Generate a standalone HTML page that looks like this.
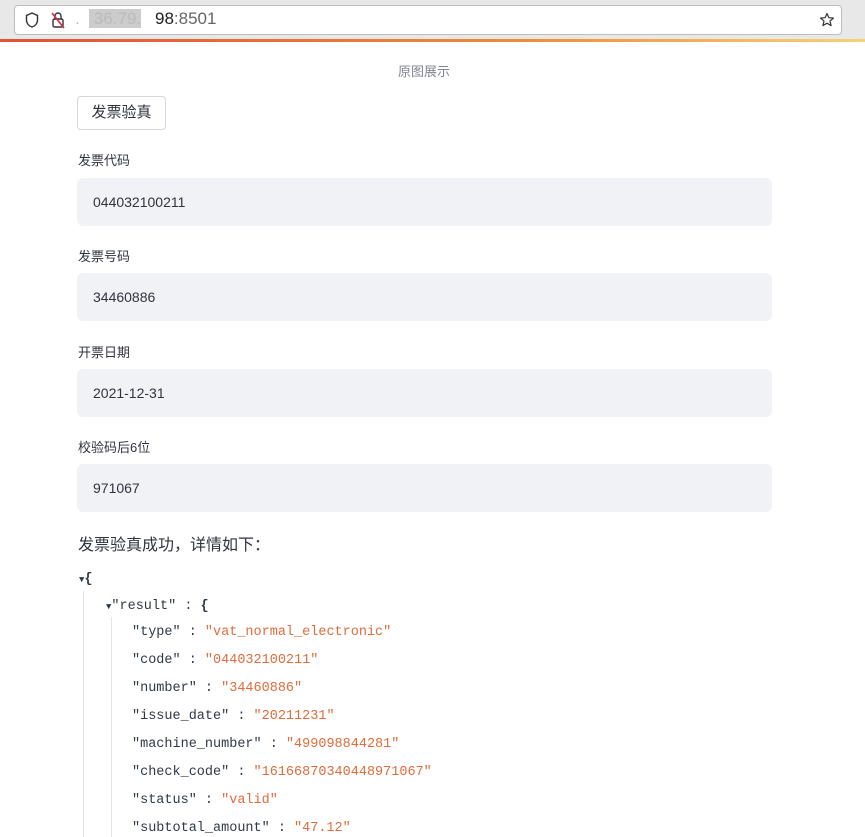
<!DOCTYPE html>
<html><head><meta charset="utf-8"><style>
body{margin:0;width:865px;height:837px;overflow:hidden;background:#fff;font-family:"Liberation Sans","Noto Sans CJK SC",sans-serif;color:#31333f;position:relative}
.bar{position:absolute;left:0;top:0;width:865px;height:40px;background:#e8e8e8}
.url{position:absolute;left:14px;top:5px;width:826px;height:28px;background:#fff;border:1px solid #bdbdbd;border-radius:4px;font-size:17px;color:#222}
.line{position:absolute;left:0;top:39px;width:865px;height:3px;background:linear-gradient(90deg,#e0523a,#f08a3a 60%,#f5d27a)}
.a{position:absolute}
.lbl{position:absolute;left:78px;font-size:13px}
.inp{position:absolute;left:77px;width:695px;height:48px;background:#f0f2f6;border-radius:6px;font-size:14px;line-height:48px;text-indent:16px}
.j{position:absolute;font-family:"Liberation Mono",monospace;font-size:13.5px;color:#2f3a45;white-space:pre}
.s{color:#e06c3c}
</style></head><body>
<div class="bar"></div>
<div class="url">
<svg class="a" style="left:10px;top:6px" width="14" height="16"><path d="M7 1L1.5 3.5V8c0 3.5 2.5 6 5.5 7 3-1 5.5-3.5 5.5-7V3.5Z" fill="none" stroke="#333" stroke-width="1.4"/></svg>
<svg class="a" style="left:36px;top:5px" width="14" height="18"><rect x="2" y="8" width="10" height="8" rx="1.5" fill="none" stroke="#333" stroke-width="1.4"/><path d="M4 8V5a3 3 0 0 1 6 0v3" fill="none" stroke="#333" stroke-width="1.4"/><path d="M1 2L13 17" stroke="#e0223a" stroke-width="1.5"/></svg>
<span class="a" style="left:60px;top:3px;color:#bbb">.&nbsp;&nbsp;<span style="background:#ccc;color:#bbb">&nbsp;36.79.</span></span>
<span class="a" style="left:140px;top:3px">98<span style="color:#666">:8501</span></span>
<svg class="a" style="right:6px;top:6px" width="16" height="16"><path d="M8 1.5l1.9 4.2 4.6.4-3.5 3 1.1 4.5L8 11.2 3.9 13.6 5 9.1 1.5 6.1l4.6-.4Z" fill="none" stroke="#333" stroke-width="1.2" stroke-linejoin="round"/></svg>
</div>
<div class="line"></div>
<div class="a" style="left:398px;top:61px;font-size:13px;color:#808495">原图展示</div>
<div class="a" style="left:77px;top:96px;width:87px;height:32px;border:1px solid #d6d6d9;border-radius:4px;font-size:15px;line-height:32px;text-align:center">发票验真</div>
<div class="lbl" style="top:150px">发票代码</div>
<div class="inp" style="top:178px">044032100211</div>
<div class="lbl" style="top:246px">发票号码</div>
<div class="inp" style="top:273px">34460886</div>
<div class="lbl" style="top:342px">开票日期</div>
<div class="inp" style="top:369px">2021-12-31</div>
<div class="lbl" style="top:437px">校验码后6位</div>
<div class="inp" style="top:464px">971067</div>
<div class="a" style="left:78px;top:531px;font-size:16px">发票验真成功，详情如下：</div>
<div class="a" style="left:83px;top:591px;width:1px;height:246px;background:#e4e4e4"></div>
<div class="a" style="left:111px;top:617px;width:1px;height:220px;background:#e4e4e4"></div>
<div class="j" style="left:79px;top:572px"><span style="font-size:9px">▼</span><b>{</b></div>
<div class="j" style="left:106px;top:599px"><span style="font-size:9px">▼</span>"result" : <b>{</b></div>
<div class="j" style="left:132px;top:625px">"type" : <span class="s">"vat_normal_electronic"</span></div>
<div class="j" style="left:132px;top:653px">"code" : <span class="s">"044032100211"</span></div>
<div class="j" style="left:132px;top:681px">"number" : <span class="s">"34460886"</span></div>
<div class="j" style="left:132px;top:709px">"issue_date" : <span class="s">"20211231"</span></div>
<div class="j" style="left:132px;top:737px">"machine_number" : <span class="s">"499098844281"</span></div>
<div class="j" style="left:132px;top:765px">"check_code" : <span class="s">"16166870340448971067"</span></div>
<div class="j" style="left:132px;top:793px">"status" : <span class="s">"valid"</span></div>
<div class="j" style="left:132px;top:821px">"subtotal_amount" : <span class="s">"47.12"</span></div>
</body></html>
